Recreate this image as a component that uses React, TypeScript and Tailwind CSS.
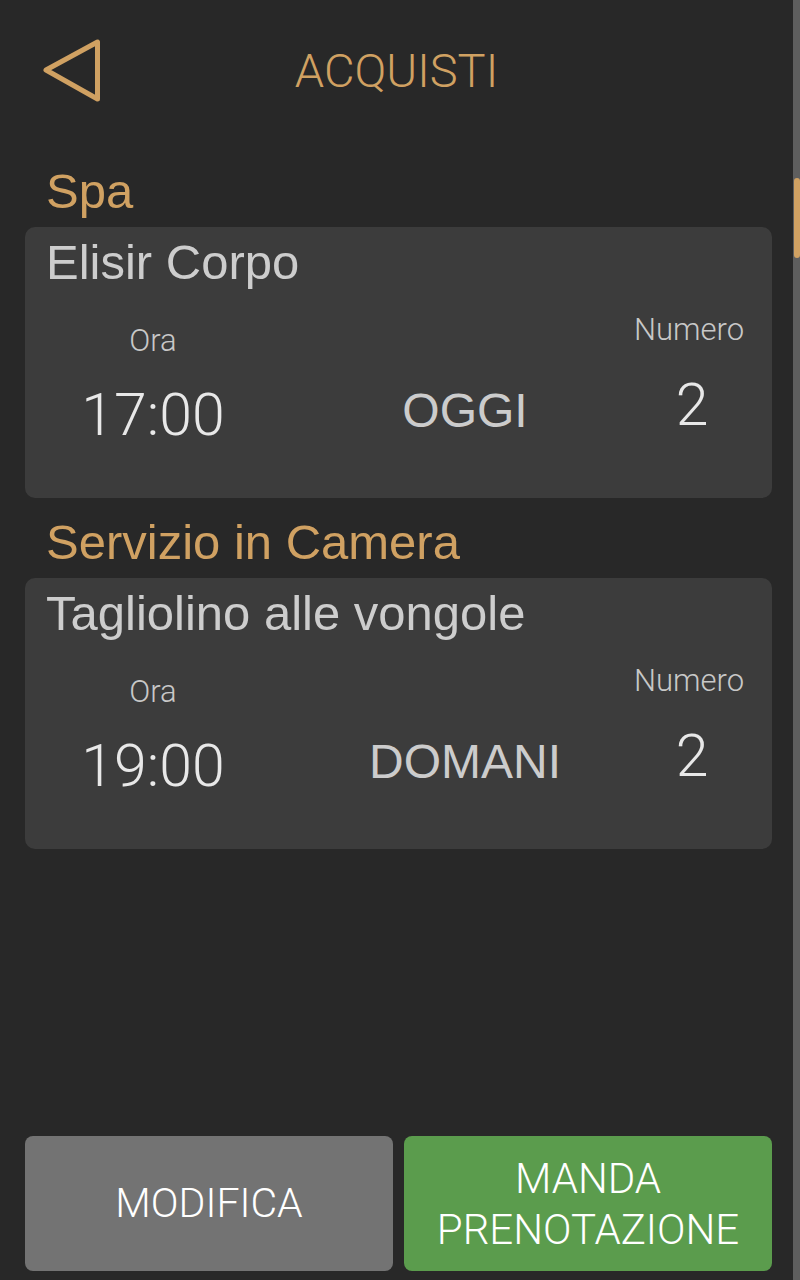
import React from "react";

type Purchase = {
  category: string;
  name: string;
  time: string;
  day: string;
  count: number;
};

const purchases: Purchase[] = [
  { category: "Spa", name: "Elisir Corpo", time: "17:00", day: "OGGI", count: 2 },
  {
    category: "Servizio in Camera",
    name: "Tagliolino alle vongole",
    time: "19:00",
    day: "DOMANI",
    count: 2,
  },
];

const sans = "font-['Liberation_Sans',Arial,sans-serif]";
const thin = "font-['Roboto','Liberation_Sans',sans-serif] font-light";

const BackIcon = () => (
  <svg width="62" height="70" viewBox="0 0 62 70" fill="none">
    <polygon
      points="6,34 57.5,6 57.5,63"
      stroke="#d0a162"
      strokeWidth="5"
      strokeLinejoin="round"
    />
  </svg>
);

const PurchaseCard = ({ purchase }: { purchase: Purchase }) => {
  return (
    <div className="h-[271px] rounded-[10px] bg-[#3c3c3c] pt-[11px]">
      <p className={`${sans} pl-[21px] text-[49px] leading-[48px] text-[#cdcdcd]`}>
        {purchase.name}
      </p>
      <div className="flex items-start">
        <div className="flex w-[256px] flex-col items-center pt-[39px]">
          <span className={`${thin} text-[31px] leading-[31px] text-[#c8c8c8]`}>Ora</span>
          <span className={`${thin} mt-[30px] text-[59px] leading-[58px] text-[#e8e8e8]`}>
            {purchase.time}
          </span>
        </div>
        <div className="ml-[34px] flex w-[300px] justify-center pt-[101px]">
          <span className={`${sans} text-[48px] leading-[48px] text-[#cccccc]`}>
            {purchase.day}
          </span>
        </div>
        <div className="flex w-[148px] flex-col items-center pt-[28px]">
          <span className={`${thin} text-[31px] leading-[31px] text-[#c8c8c8]`}>Numero</span>
          <span className={`${thin} mt-[31px] pl-[6px] text-[59px] leading-[58px] text-[#e8e8e8]`}>
            {purchase.count}
          </span>
        </div>
      </div>
    </div>
  );
};

export default function App() {
  return (
    <div className="relative flex h-[1280px] w-full flex-col overflow-hidden bg-[#282828] pl-[25px] pr-[28px]">
      {/* header */}
      <div className="-ml-[25px] -mr-[28px] grid h-[142px] grid-cols-[1fr_auto_1fr] items-center pr-[7px]">
        <div className="pl-[40px]">
          <BackIcon />
        </div>
        <h1 className={`${thin} text-[47px] leading-[46px] text-[#d0a162]`}>ACQUISTI</h1>
        <div />
      </div>

      {purchases.map((p, i) => (
        <div key={p.name} className={i === 0 ? "mt-[25px]" : "mt-[20px]"}>
          <h2 className={`${sans} mb-[12px] pl-[21px] text-[49px] leading-[48px] text-[#d0a162]`}>
            {p.category}
          </h2>
          <PurchaseCard purchase={p} />
        </div>
      ))}

      <div className="flex-1" />

      <div className="mb-[9px] grid h-[135px] grid-cols-2 gap-[11px]">
        <button
          type="button"
          className={`${thin} flex items-center justify-center rounded-[8px] bg-[#737373] text-[41px] leading-[51px] text-white`}
        >
          MODIFICA
        </button>
        <button
          type="button"
          className={`${thin} flex flex-col items-center justify-center rounded-[8px] bg-[#5b9c4d] text-[42px] leading-[51px] text-white`}
        >
          <span>MANDA</span>
          <span>PRENOTAZIONE</span>
        </button>
      </div>

      {/* scrollbar */}
      <div className="absolute top-0 right-0 h-full w-[7px] bg-[#5e5e5e]">
        <div className="mt-[178px] ml-[1px] h-[80px] w-[6px] rounded-full bg-[#d0a162]" />
      </div>
    </div>
  );
}
